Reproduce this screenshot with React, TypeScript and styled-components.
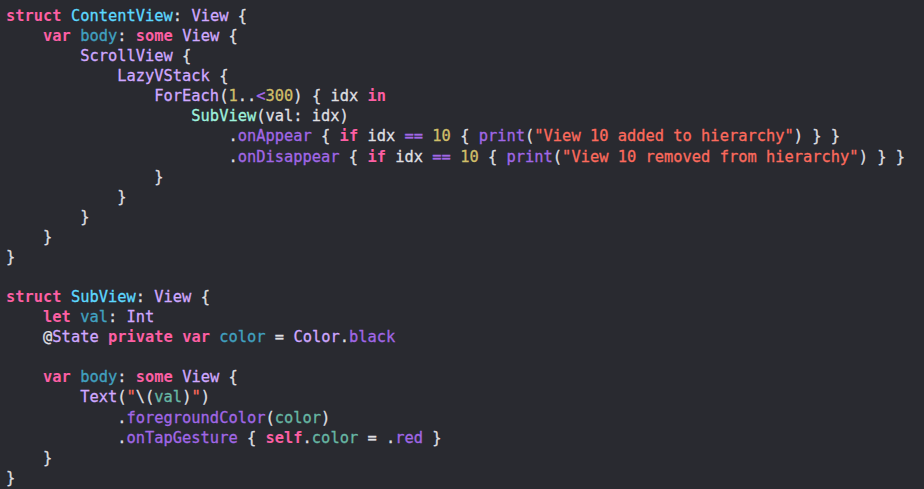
import React from "react";
import styled, { createGlobalStyle } from "styled-components";

const Global = createGlobalStyle`
  html, body { margin: 0; padding: 0; background: #292a30; }
  #root { min-height: 100vh; }
`;

type Kind = "p" | "kw" | "decl" | "odecl" | "type" | "ptype" | "fn" | "prop" | "num" | "str";

const colors: Record<Kind, string> = {
  p: "#dfdfe0",
  kw: "#fc5fa3",
  decl: "#5dd8ff",
  odecl: "#41a1c0",
  type: "#d0a8ff",
  ptype: "#9ef1dd",
  fn: "#a167e6",
  prop: "#67b7a4",
  num: "#d0bf69",
  str: "#fc6a5d",
};

const Editor = styled.div`
  box-sizing: border-box;
  width: 924px;
  height: 489px;
  background: #292a30;
  padding: 6px 0 0 6px;
  font-family: "DejaVu Sans Mono", "Liberation Mono", monospace;
  font-size: 15.4px;
  overflow: hidden;
`;

const Line = styled.div`
  height: 20.08px;
  line-height: 20.08px;
  white-space: pre;
  color: #dfdfe0;
`;

const Tok = styled.span<{ $kind: Kind }>`
  color: ${(p) => colors[p.$kind]};
  font-weight: ${(p) => (p.$kind === "kw" ? 700 : 400)};
  -webkit-text-stroke: ${(p) => (p.$kind === "kw" ? "0" : "0.3px")} ${(p) => colors[p.$kind]};
`;

type T = [Kind, string];
const k = (s: string): T => ["kw", s];
const p = (s: string): T => ["p", s];

const code: T[][] = [
  [k("struct"), p(" "), ["decl", "ContentView"], p(": "), ["type", "View"], p(" {")],
  [p("    "), k("var"), p(" "), ["odecl", "body"], p(": "), k("some"), p(" "), ["type", "View"], p(" {")],
  [p("        "), ["type", "ScrollView"], p(" {")],
  [p("            "), ["type", "LazyVStack"], p(" {")],
  [p("                "), ["type", "ForEach"], p("("), ["num", "1"], p(".."), ["fn", "<"], ["num", "300"], p(") { idx "), k("in")],
  [p("                    "), ["ptype", "SubView"], p("(val: idx)")],
  [p("                        ."), ["fn", "onAppear"], p(" { "), k("if"), p(" idx "), ["fn", "=="], p(" "), ["num", "10"], p(" { "), ["fn", "print"], p("("), ["str", "\"View 10 added to hierarchy\""], p(") } }")],
  [p("                        ."), ["fn", "onDisappear"], p(" { "), k("if"), p(" idx "), ["fn", "=="], p(" "), ["num", "10"], p(" { "), ["fn", "print"], p("("), ["str", "\"View 10 removed from hierarchy\""], p(") } }")],
  [p("                }")],
  [p("            }")],
  [p("        }")],
  [p("    }")],
  [p("}")],
  [p("")],
  [k("struct"), p(" "), ["decl", "SubView"], p(": "), ["type", "View"], p(" {")],
  [p("    "), k("let"), p(" "), ["odecl", "val"], p(": "), ["type", "Int"]],
  [p("    @"), ["type", "State"], p(" "), k("private"), p(" "), k("var"), p(" "), ["odecl", "color"], p(" = "), ["type", "Color"], p("."), ["fn", "black"]],
  [p("")],
  [p("    "), k("var"), p(" "), ["odecl", "body"], p(": "), k("some"), p(" "), ["type", "View"], p(" {")],
  [p("        "), ["type", "Text"], p("("), ["str", "\""], p("\\("), ["prop", "val"], p(")"), ["str", "\""], p(")")],
  [p("            ."), ["fn", "foregroundColor"], p("("), ["prop", "color"], p(")")],
  [p("            ."), ["fn", "onTapGesture"], p(" { "), k("self"), p("."), ["prop", "color"], p(" = ."), ["fn", "red"], p(" }")],
  [p("    }")],
  [p("}")],
];

export default function App() {
  return (
    <>
      <Global />
      <Editor>
        {code.map((line, i) => (
          <Line key={i}>
            {line.map(([kind, text], j) => (
              <Tok key={j} $kind={kind}>
                {text}
              </Tok>
            ))}
          </Line>
        ))}
      </Editor>
    </>
  );
}
